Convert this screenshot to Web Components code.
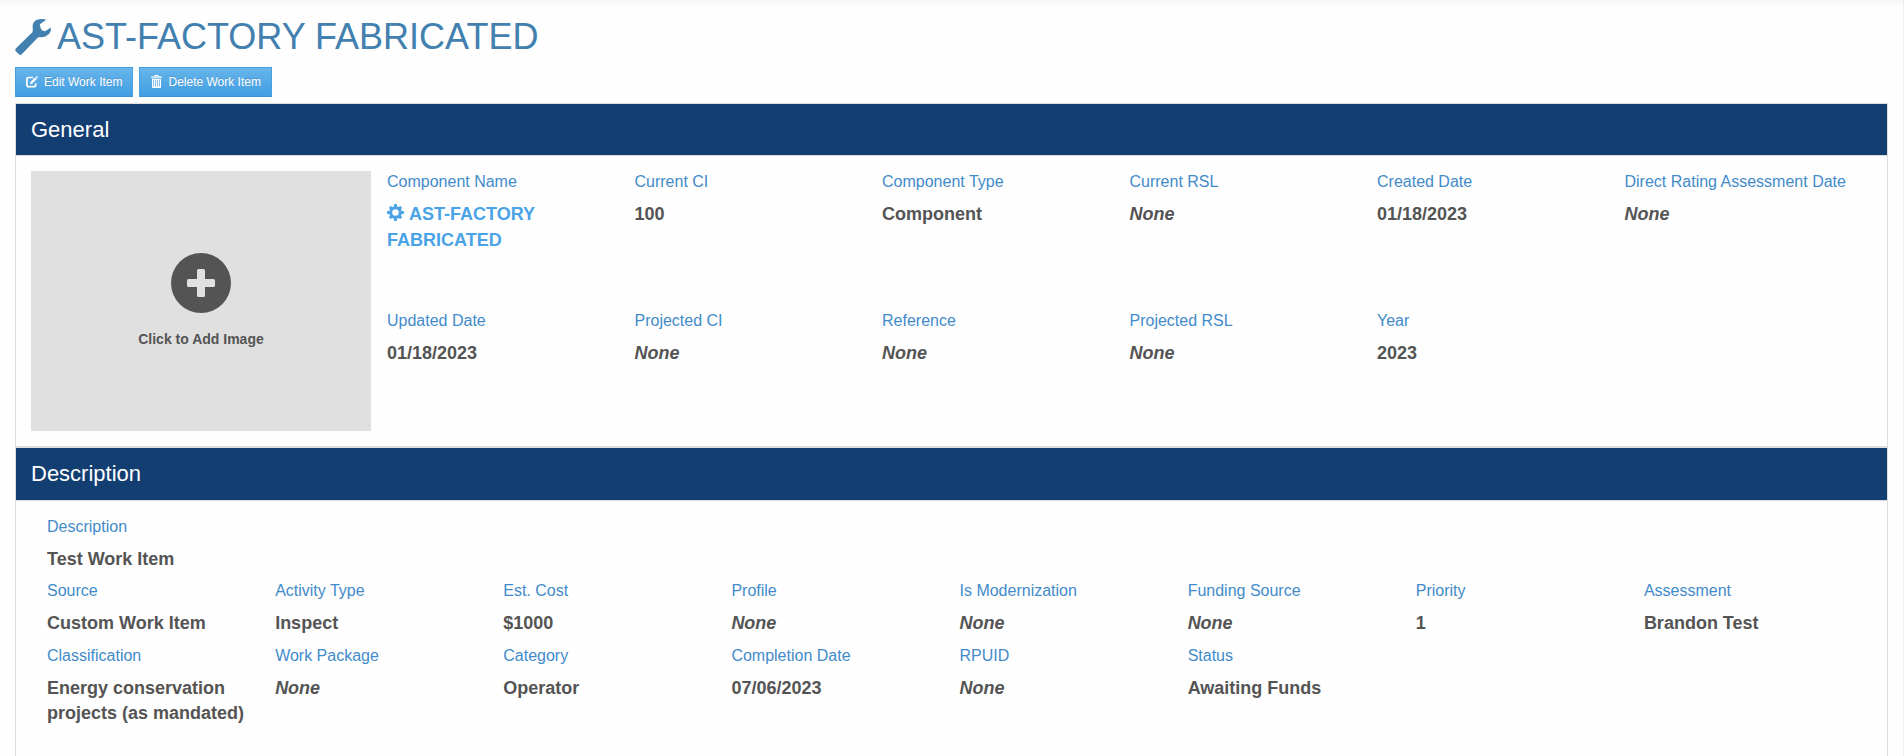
<!DOCTYPE html>
<html lang="en">
<head>
<meta charset="utf-8">
<title>AST-FACTORY FABRICATED</title>
<style>
html,body{margin:0;height:100%;overflow:hidden}
body{background:#fefefe;color:#545454;font:14px/1.42857 "Liberation Sans",Arial,sans-serif}
</style>
</head>
<body>
<work-item-page></work-item-page>
<script>
const define = (name, html, setup) => customElements.define(name, class extends HTMLElement {
  constructor() {
    super();
    this.attachShadow({ mode: 'open' }).innerHTML = html;
  }
  connectedCallback() { if (setup) setup(this, this.shadowRoot); }
});

const ICONS = {
  wrench: ['0 0 36 36', '<path d="M21.3 1.1Q26.5-.9 31.3.8L24.8 5.2Q25 9 27.2 11.4L30 12.2 36 8.4Q36.2 13 33.3 15.6 29.6 19 24.6 17.9L22.9 18.6 6.5 35.4Q5 36.5 3.6 35.1L.6 32.1Q-.4 30.8.8 29.4L17.6 13 17.8 10Q16.8 3.9 21.3 1.1Z"/>'],
  edit: ['0 0 12 12', '<path fill="none" stroke="currentColor" stroke-width="1.7" d="M7.2 1.5H2.7Q.9 1.5.9 3.2V9Q.9 10.7 2.7 10.7H7.9Q9.7 10.7 9.7 9V7.2"/><path d="M9.3 1.2 11 2.8 6.4 7.5 4 8.2 4.7 5.8ZM9.9.6 10.4.1Q10.7 0 11 .2L11.9 1.1Q12.1 1.4 11.9 1.7L11.5 2.2Z"/>'],
  trash: ['-1 0 12 13', '<path fill-rule="evenodd" d="M0 2.8V1.9Q0 1.4.6 1.4H3.3V.8Q3.3 0 4.1 0H6.9Q7.7 0 7.7.8V1.4H10.4Q11 1.4 11 1.9V2.8ZM4.2.9V1.4H6.8V.9ZM1 3.7H10V12Q10 13 9 13H2Q1 13 1 12ZM2.3 4.8V11.6H3V4.8ZM4.2 4.8V11.6H4.9V4.8ZM6.1 4.8V11.6H6.8V4.8ZM8 4.8V11.6H8.7V4.8Z"/>'],
  cog: ['-9 -9 18 18', '<circle r="5.1" fill="none" stroke="currentColor" stroke-width="3.2"/><path d="M-1.9-6-1.3-9H1.3L1.9-6ZM-1.9 6-1.3 9H1.3L1.9 6ZM-6-1.9-9-1.3V1.3L-6 1.9ZM6-1.9 9-1.3V1.3L6 1.9Z"/><path transform="rotate(45)" d="M-2-6-1.4-8.5H1.4L2-6ZM-2 6-1.4 8.5H1.4L2 6ZM-6-2-8.5-1.4V1.4L-6 2ZM6-2 8.5-1.4V1.4L6 2Z"/>'],
  plus: ['0 0 60 60', '<path fill-rule="evenodd" d="M30 0A30 30 0 1 1 30 60A30 30 0 1 1 30 0ZM27.5 16Q26 16 26 17.5V26H17.5Q16 26 16 27.5V32.5Q16 34 17.5 34H26V42.5Q26 44 27.5 44H32.5Q34 44 34 42.5V34H42.5Q44 34 44 32.5V27.5Q44 26 42.5 26H34V17.5Q34 16 32.5 16Z"/>']
};

define('ui-icon', '<style>:host{display:inline-block;flex:none}svg{display:block;width:100%;height:100%;fill:currentColor;overflow:visible}</style><svg aria-hidden="true"></svg>', (el, root) => {
  const [box, body] = ICONS[el.getAttribute('name')];
  const svg = root.querySelector('svg');
  svg.setAttribute('viewBox', box);
  svg.innerHTML = body;
});

define('page-title', `<style>
:host{display:block}
h1{display:flex;align-items:center;gap:6px;margin:0;height:40px;font-size:36px;font-weight:400;line-height:40px;color:#4180af;white-space:nowrap}
ui-icon{width:36px;height:36px}
</style><h1><ui-icon name="wrench"></ui-icon><span><slot></slot></span></h1>`);

define('action-button', `<style>
:host{display:block}
button{display:flex;align-items:center;box-sizing:border-box;height:30px;margin:0;padding:0 10px;border:1px solid #45a0e0;border-bottom-color:#3990d4;border-radius:0;background:linear-gradient(#67b5ea,#429de3);color:#fff;font:12px/18px "Liberation Sans",Arial,sans-serif;text-shadow:0 -1px 0 rgba(0,0,0,.15);white-space:nowrap}
::slotted(ui-icon){margin-right:6px}
</style><button type="button"><slot name="icon"></slot><slot></slot></button>`);

define('info-panel', `<style>
:host{display:block;border:1px solid #ddd}
header{height:51.43px;border-bottom:1px solid #ddd;background:#133e72;color:#fff;padding:0 15px;font-size:22px;line-height:51.43px}
.body{padding:15px}
</style><header><slot name="title"></slot></header><div class="body"><slot></slot></div>`);

define('image-drop', `<style>
:host{display:flex;flex-direction:column;align-items:center;box-sizing:border-box;width:340px;height:260px;padding-top:82px;background:#e0e0e0;color:#545454;font-weight:700}
ui-icon{width:60px;height:60px;margin-bottom:17px}
</style><ui-icon name="plus"></ui-icon><span><slot></slot></span>`);

define('data-field', `<style>
:host{display:block}
.label{font-size:16px;color:#428bca;white-space:nowrap}
.value{margin:8px 0;font-size:18px;font-weight:700;color:#545454}
:host([empty]) .value{font-style:italic}
:host([link]) .value{color:#4aa3e6}
</style><div class="label"></div><div class="value"><slot></slot></div>`, (el, root) => {
  root.querySelector('.label').textContent = el.getAttribute('label');
  if (!el.textContent.trim()) { el.setAttribute('empty', ''); el.textContent = 'None'; }
});

define('work-item-page', `<style>
:host{display:block;box-sizing:border-box;height:756px;overflow:hidden;padding:17px 15px 0;border-right:1px solid #eee;background:linear-gradient(#f5f5f5,#fefefe 6px)}
.actions{display:flex;gap:6px;margin:10px 0 6px}
.general{display:grid;grid-template-columns:340px 1fr;gap:16px}
.grid6{display:grid;grid-template-columns:repeat(6,1fr);grid-auto-rows:139px;height:260px}
.grid8{display:grid;grid-template-columns:repeat(8,1fr);padding-left:16px;height:300px;align-content:start}
.wide{grid-column:1/-1}
.gear{width:17px;height:17px;margin-right:5px;vertical-align:-1px}
.i-edit{width:12px;height:12px}.i-trash{width:12px;height:13px;margin-bottom:2px}
</style>
<page-title>AST-FACTORY FABRICATED</page-title>
<div class="actions">
<action-button><ui-icon slot="icon" class="i-edit" name="edit"></ui-icon>Edit Work Item</action-button>
<action-button><ui-icon slot="icon" class="i-trash" name="trash"></ui-icon>Delete Work Item</action-button>
</div>
<info-panel><span slot="title">General</span>
<div class="general"><image-drop>Click to Add Image</image-drop>
<div class="grid6">
<data-field label="Component Name" link><ui-icon class="gear" name="cog"></ui-icon>AST-FACTORY FABRICATED</data-field>
<data-field label="Current CI">100</data-field>
<data-field label="Component Type">Component</data-field>
<data-field label="Current RSL"></data-field>
<data-field label="Created Date">01/18/2023</data-field>
<data-field label="Direct Rating Assessment Date"></data-field>
<data-field label="Updated Date">01/18/2023</data-field>
<data-field label="Projected CI"></data-field>
<data-field label="Reference"></data-field>
<data-field label="Projected RSL"></data-field>
<data-field label="Year">2023</data-field>
</div></div></info-panel>
<info-panel><span slot="title">Description</span>
<div class="grid8">
<data-field class="wide" label="Description">Test Work Item</data-field>
<data-field label="Source">Custom Work Item</data-field>
<data-field label="Activity Type">Inspect</data-field>
<data-field label="Est. Cost">$1000</data-field>
<data-field label="Profile"></data-field>
<data-field label="Is Modernization"></data-field>
<data-field label="Funding Source"></data-field>
<data-field label="Priority">1</data-field>
<data-field label="Assessment">Brandon Test</data-field>
<data-field label="Classification">Energy conservation projects (as mandated)</data-field>
<data-field label="Work Package"></data-field>
<data-field label="Category">Operator</data-field>
<data-field label="Completion Date">07/06/2023</data-field>
<data-field label="RPUID"></data-field>
<data-field label="Status">Awaiting Funds</data-field>
</div></info-panel>`);
</script>
</body>
</html>
